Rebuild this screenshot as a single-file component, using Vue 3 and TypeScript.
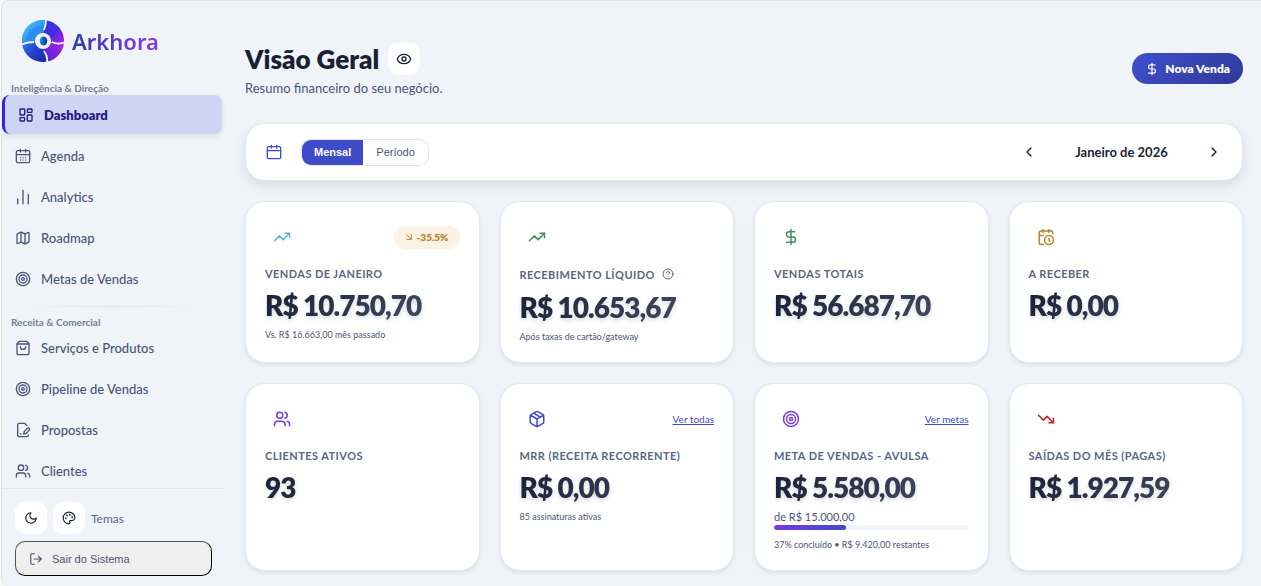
<script setup lang="ts">
import { ref } from 'vue'

interface NavItem { label: string; icon: string; active?: boolean }
interface NavGroup { title: string; items: NavItem[] }
interface Card {
  icon: string
  tone: string
  label: string
  value: string
  note?: string
  trend?: string
  link?: string
  help?: boolean
  goal?: string
  progress?: number
}

const icons: Record<string, string> = {
  dashboard: '<rect x="3" y="3" width="7" height="9" rx="1"/><rect x="14" y="3" width="7" height="5" rx="1"/><rect x="14" y="12" width="7" height="9" rx="1"/><rect x="3" y="16" width="7" height="5" rx="1"/>',
  calendarDays: '<path d="M8 2v4M16 2v4"/><rect x="2" y="4" width="20" height="18" rx="2"/><path d="M2 10h20M8 14h.01M12 14h.01M16 14h.01M8 18h.01M12 18h.01M16 18h.01"/>',
  calendar: '<path d="M8 2v4M16 2v4"/><rect x="2" y="4" width="20" height="18" rx="2"/><path d="M2 10h20"/>',
  chart: '<path d="M20 22V8M12 22V2M4 22v-7"/>',
  map: '<path d="M14.106 5.553a2 2 0 0 0 1.788 0l3.659-1.83A1 1 0 0 1 21 4.619v12.764a1 1 0 0 1-.553.894l-4.553 2.277a2 2 0 0 1-1.788 0l-4.212-2.106a2 2 0 0 0-1.788 0l-3.659 1.83A1 1 0 0 1 3 19.381V6.618a1 1 0 0 1 .553-.894l4.553-2.277a2 2 0 0 1 1.788 0z"/><path d="M15 5.764v15M9 3.236v15"/>',
  target: '<circle cx="12" cy="12" r="10"/><circle cx="12" cy="12" r="6"/><circle cx="12" cy="12" r="2"/>',
  bag: '<path d="M6 2 3 6v14a2 2 0 0 0 2 2h14a2 2 0 0 0 2-2V6l-3-4Z"/><path d="M3 6h18M16 10a4 4 0 0 1-8 0"/>',
  proposal: '<path d="M20 19.5v.5a2 2 0 0 1-2 2H6a2 2 0 0 1-2-2V4a2 2 0 0 1 2-2h8.5L18 5.5"/><path d="M8 18h1"/><path d="M18.42 9.61a2.1 2.1 0 1 1 2.97 2.97L16.95 17 13 18l.99-3.95Z"/>',
  users: '<path d="M16 21v-2a4 4 0 0 0-4-4H6a4 4 0 0 0-4 4v2"/><circle cx="9" cy="7" r="4"/><path d="M22 21v-2a4 4 0 0 0-3-3.87M16 3.13a4 4 0 0 1 0 7.75"/>',
  moon: '<path d="M12 3a6 6 0 0 0 9 9 9 9 0 1 1-9-9Z"/>',
  palette: '<circle cx="13.5" cy="6.5" r=".6"/><circle cx="17.5" cy="10.5" r=".6"/><circle cx="8.5" cy="7.5" r=".6"/><circle cx="6.5" cy="12.5" r=".6"/><path d="M12 2C6.5 2 2 6.5 2 12s4.5 10 10 10c.926 0 1.648-.746 1.648-1.688 0-.437-.18-.835-.437-1.125-.29-.289-.438-.652-.438-1.125a1.64 1.64 0 0 1 1.668-1.668h1.996c3.051 0 5.555-2.503 5.555-5.554C21.965 6.012 17.461 2 12 2z"/>',
  logout: '<path d="M9 21H5a2 2 0 0 1-2-2V5a2 2 0 0 1 2-2h4M16 17l5-5-5-5M21 12H9"/>',
  eye: '<path d="M2.06 12.35a1 1 0 0 1 0-.7 10.75 10.75 0 0 1 19.88 0 1 1 0 0 1 0 .7 10.75 10.75 0 0 1-19.88 0"/><circle cx="12" cy="12" r="3"/>',
  dollar: '<path d="M12 2v20M17 5H9.5a3.5 3.5 0 0 0 0 7h5a3.5 3.5 0 0 1 0 7H6"/>',
  up: '<path d="m22 7-8.5 8.5-5-5L2 17"/><path d="M16 7h6v6"/>',
  down: '<path d="m22 17-8.5-8.5-5 5L2 7"/><path d="M16 17h6v-6"/>',
  calendarClock: '<path d="M21 7.5V6a2 2 0 0 0-2-2H5a2 2 0 0 0-2 2v14a2 2 0 0 0 2 2h3.5M16 2v4M8 2v4M3 10h5M17.5 17.5 16 16.3V14"/><circle cx="16" cy="16" r="6"/>',
  box: '<path d="M11 21.73a2 2 0 0 0 2 0l7-4A2 2 0 0 0 21 16V8a2 2 0 0 0-1-1.73l-7-4a2 2 0 0 0-2 0l-7 4A2 2 0 0 0 3 8v8a2 2 0 0 0 1 1.73zM12 22V12M3.3 7l8.7 5 8.7-5M7.5 4.27l9 5.15"/>',
  arrow: '<path d="m5 5 14 14M19 5v14H5"/>',
  help: '<circle cx="12" cy="12" r="10"/><path d="M9.09 9a3 3 0 0 1 5.83 1c0 2-3 3-3 3M12 17h.01"/>',
  left: '<path d="m15 18-6-6 6-6"/>',
  right: '<path d="m9 18 6-6-6-6"/>',
}

const groups: NavGroup[] = [
  {
    title: 'Inteligência & Direção',
    items: [
      { label: 'Dashboard', icon: 'dashboard', active: true },
      { label: 'Agenda', icon: 'calendarDays' },
      { label: 'Analytics', icon: 'chart' },
      { label: 'Roadmap', icon: 'map' },
      { label: 'Metas de Vendas', icon: 'target' },
    ],
  },
  {
    title: 'Receita & Comercial',
    items: [
      { label: 'Serviços e Produtos', icon: 'bag' },
      { label: 'Pipeline de Vendas', icon: 'target' },
      { label: 'Propostas', icon: 'proposal' },
      { label: 'Clientes', icon: 'users' },
    ],
  },
]

const cards: Card[] = [
  { icon: 'up', tone: 'cyan', label: 'Vendas de Janeiro', value: 'R$ 10.750,70', note: 'Vs. R$ 16.663,00 mês passado', trend: '-35.5%' },
  { icon: 'up', tone: 'green', label: 'Recebimento Líquido', value: 'R$ 10.653,67', note: 'Após taxas de cartão/gateway', help: true },
  { icon: 'dollar', tone: 'green', label: 'Vendas Totais', value: 'R$ 56.687,70' },
  { icon: 'calendarClock', tone: 'amber', label: 'A Receber', value: 'R$ 0,00' },
  { icon: 'users', tone: 'purple', label: 'Clientes Ativos', value: '93' },
  { icon: 'box', tone: 'blue', label: 'MRR (Receita Recorrente)', value: 'R$ 0,00', note: '85 assinaturas ativas', link: 'Ver todas' },
  { icon: 'target', tone: 'purple', label: 'Meta de Vendas - Avulsa', value: 'R$ 5.580,00', note: '37% concluído • R$ 9.420,00 restantes', link: 'Ver metas', goal: 'de R$ 15.000,00', progress: 37 },
  { icon: 'down', tone: 'red', label: 'Saídas do Mês (Pagas)', value: 'R$ 1.927,59' },
]

const period = ref<'Mensal' | 'Período'>('Mensal')
</script>

<template>
  <div class="app">
    <aside class="sidebar">
      <div class="brand">
        <svg class="logo" viewBox="0 0 42 42" aria-hidden="true">
          <defs>
            <linearGradient id="g1" x1="0" y1="0" x2="1" y2="1"><stop offset="0" stop-color="#3fd0ff" /><stop offset="1" stop-color="#2468ea" /></linearGradient>
            <linearGradient id="g2" x1="0" y1="0" x2="1" y2="1"><stop offset="0" stop-color="#2b38dc" /><stop offset=".55" stop-color="#4a2ae0" /><stop offset="1" stop-color="#b51fe0" /></linearGradient>
            <linearGradient id="g3" x1="1" y1="0" x2="0" y2="1"><stop offset="0" stop-color="#c01fdc" /><stop offset=".5" stop-color="#7a24dc" /><stop offset="1" stop-color="#4a24d2" /></linearGradient>
            <linearGradient id="g4" x1="0" y1="0" x2="1" y2="1"><stop offset="0" stop-color="#2b7df2" /><stop offset=".5" stop-color="#2340cc" /><stop offset="1" stop-color="#20249c" /></linearGradient>
            <linearGradient id="g5"><stop offset="0" stop-color="#1b9af0" /><stop offset="1" stop-color="#102a86" /></linearGradient>
          </defs>
          <path d="M21 21 22 9Q23 4 24 .2A21 21 0 0 0 0 24Q6 22 12 22Z" fill="url(#g1)" />
          <path d="M9 21Q10 12 21 9L23 5Q12 4 6 13Q4 17 4 23Z" fill="#2b7df2" opacity=".55" />
          <path d="M21 21 22 9Q24 5 24 .2A21 21 0 0 1 42 22Q36 24 29 22Z" fill="url(#g2)" />
          <path d="M21 21 30 23Q36 25 42 22A21 21 0 0 1 25 41.6Q26 36 22 31Z" fill="url(#g3)" />
          <path d="M21 21 22 31Q26 36 25 41.6A21 21 0 0 1 0 24Q6 21 12 22Z" fill="url(#g4)" />
          <path d="M24 0Q24 5 22 10M42 22.500Q36 25 30 22M25 42Q26 36 22 31M0 24.500Q6 22 12 22" fill="none" stroke="#f2f6fc" stroke-width="1.800" />
          <circle cx="21" cy="21" r="8" fill="#f2f6fc" />
          <ellipse cx="21.500" cy="21" rx="3.800" ry="4.600" fill="url(#g5)" />
        </svg>
        <span class="brand-name">Arkhora</span>
      </div>

      <nav class="nav" aria-label="Principal">
        <section v-for="group in groups" :key="group.title" class="nav-group">
          <h2 class="nav-title">{{ group.title }}</h2>
          <a v-for="item in group.items" :key="item.label" href="#" class="nav-item" :class="{ active: item.active }">
            <svg class="icon icon-nav" viewBox="0 0 24 24" aria-hidden="true" v-html="icons[item.icon]"></svg>
            <span>{{ item.label }}</span>
          </a>
        </section>
      </nav>

      <div class="sidebar-footer">
        <div class="themes">
          <button type="button" class="square" aria-label="Modo escuro"><svg class="icon icon-small" viewBox="0 0 24 24" v-html="icons.moon"></svg></button>
          <button type="button" class="square" aria-label="Paleta"><svg class="icon icon-small" viewBox="0 0 24 24" v-html="icons.palette"></svg></button>
          <span>Temas</span>
        </div>
        <button type="button" class="logout">
          <svg class="icon icon-small" viewBox="0 0 24 24" aria-hidden="true" v-html="icons.logout"></svg>
          <span>Sair do Sistema</span>
        </button>
      </div>
    </aside>

    <main class="main">
      <header class="header">
        <div>
          <div class="title-row">
            <h1>Visão Geral</h1>
            <button type="button" class="square" aria-label="Ocultar valores"><svg class="icon icon-eye" viewBox="0 0 24 24" v-html="icons.eye"></svg></button>
          </div>
          <p class="subtitle">Resumo financeiro do seu negócio.</p>
        </div>
        <button type="button" class="primary">
          <svg class="icon icon-small" viewBox="0 0 24 24" aria-hidden="true" v-html="icons.dollar"></svg>
          <span>Nova Venda</span>
        </button>
      </header>

      <section class="filter">
        <svg class="icon icon-filter" viewBox="0 0 24 24" aria-hidden="true" v-html="icons.calendar"></svg>
        <div class="segmented">
          <button type="button" :class="{ on: period === 'Mensal' }" @click="period = 'Mensal'">Mensal</button>
          <button type="button" :class="{ on: period === 'Período' }" @click="period = 'Período'">Período</button>
        </div>
        <div class="month">
          <button type="button" class="step" aria-label="Mês anterior"><svg class="icon icon-nav" viewBox="0 0 24 24" v-html="icons.left"></svg></button>
          <strong>Janeiro de 2026</strong>
          <button type="button" class="step" aria-label="Próximo mês"><svg class="icon icon-nav" viewBox="0 0 24 24" v-html="icons.right"></svg></button>
        </div>
      </section>

      <section class="grid">
        <article v-for="card in cards" :key="card.label" class="card">
          <div class="card-top">
            <span class="card-icon" :class="card.tone"><svg class="icon icon-card" viewBox="0 0 24 24" aria-hidden="true" v-html="icons[card.icon]"></svg></span>
            <span v-if="card.trend" class="trend">
              <svg class="icon icon-trend" viewBox="0 0 24 24" aria-hidden="true" v-html="icons.arrow"></svg>{{ card.trend }}
            </span>
            <a v-if="card.link" href="#" class="card-link">{{ card.link }}</a>
          </div>
          <h3 class="label" :class="{ tall: card.help }">
            {{ card.label }}
            <svg v-if="card.help" class="icon icon-help" viewBox="0 0 24 24" aria-hidden="true" v-html="icons.help"></svg>
          </h3>
          <div class="value"><span>{{ card.value }}</span></div>
          <template v-if="card.progress">
            <p class="goal">{{ card.goal }}</p>
            <div class="track"><div class="fill" :style="{ width: card.progress + '%' }"></div></div>
          </template>
          <p v-if="card.note" class="note">{{ card.note }}</p>
        </article>
      </section>
    </main>
  </div>
</template>

<style>
body { margin: 0; background: #f8f8f8; overflow: hidden; }
</style>

<style scoped>
* { box-sizing: border-box; }
h1, h2, h3, p { margin: 0; }
button { font: inherit; color: inherit; cursor: pointer; }

.app {
  display: flex;
  height: 100vh;
  margin-left: 1px;
  border-left: 1px solid #e2e3e5;
  border-top: 1px solid #e2e3e5;
  border-radius: 8px 0 0 8px;
  background: #f0f4f8;
  color: #1a1f36;
  font-family: Lato, "Liberation Sans", sans-serif;
  overflow: hidden;
}
.icon {
  display: block;
  flex: none;
  fill: none;
  stroke: currentColor;
  stroke-width: 2;
  stroke-linecap: round;
  stroke-linejoin: round;
}
.icon-nav { width: 16px; height: 16px; }
.icon-small { width: 14px; height: 14px; }
.icon-eye { width: 16px; height: 16px; }
.icon-filter { width: 16px; height: 16px; color: #3f4cc8; }
.icon-card { width: 18px; height: 18px; }
.icon-trend { width: 8px; height: 8px; stroke-width: 3; }
.icon-help { width: 12px; height: 12px; }

.sidebar { display: flex; flex-direction: column; flex: none; width: 223px; }
.brand { display: flex; align-items: center; gap: 8px; padding: 19px 20px; }
.logo { width: 42px; height: 42px; }
.brand-name {
  font-family: "Noto Sans", sans-serif;
  font-size: 22px;
  font-weight: 600;
  line-height: 30px;
  background: linear-gradient(90deg, #2f3cae, #6a35cf 60%, #8540dc);
  background-clip: text;
  color: transparent;
}
.nav { flex: 1; min-height: 0; overflow: hidden; }
.nav-group { display: flex; flex-direction: column; gap: 3px; padding-right: 3px; }
.nav-group + .nav-group::before {
  content: "";
  height: 1px;
  margin: 8px 20px 5px;
  background: linear-gradient(90deg, transparent, #dde3f0, transparent);
}
.nav-title { height: 14px; margin-bottom: -3px; padding-left: 9px; font-size: 10px; font-weight: 700; line-height: 14px; color: #717d96; }
.nav-item {
  display: flex;
  align-items: center;
  gap: 10px;
  height: 38px;
  padding-left: 13px;
  border-radius: 8px;
  font-size: 13px;
  font-weight: 500;
  color: #4a5578;
  text-decoration: none;
}
.nav-item.active {
  height: 39px;
  border-left: 3px solid #3a24d4;
  background: #cdd4f4;
  color: #2a1a80;
  font-weight: 800;
  box-shadow: 0 2px 5px rgba(60, 70, 140, .12);
}

.sidebar-footer { padding: 13px 13px 10px; border-top: 1px solid #e0e6f0; }
.themes { display: flex; align-items: center; gap: 6px; margin-bottom: 7px; font-size: 12px; color: #5a6785; }
.square {
  display: flex;
  align-items: center;
  justify-content: center;
  width: 32px;
  height: 32px;
  padding: 0;
  border: 0;
  border-radius: 10px;
  background: #fff;
  color: #1a1f36;
}
.logout {
  display: flex;
  align-items: center;
  gap: 9px;
  width: 100%;
  height: 35px;
  padding: 0 13px;
  border: 1px outset #000;
  border-radius: 10px;
  background: #efefef;
  font-family: "Liberation Sans", Arial, sans-serif;
  font-size: 11px;
  color: #4a5578;
}

.main { flex: 1; min-width: 0; padding: 42px 18px 14px 20px; }
.header { display: flex; align-items: flex-start; justify-content: space-between; margin-bottom: 26px; }
.title-row { display: flex; align-items: center; gap: 9px; }
h1 { font-size: 26px; font-weight: 800; line-height: 32px; }
.subtitle { margin-top: 4px; font-size: 13px; line-height: 18px; color: #4a5578; }
.primary {
  display: flex;
  align-items: center;
  gap: 6px;
  height: 31px;
  margin-top: 10px;
  padding: 0 13px;
  border: 0;
  border-radius: 16px;
  background: linear-gradient(135deg, #3f4fd0, #2f3a98);
  color: #fff;
  font-size: 12px;
  font-weight: 800;
}

.filter {
  display: flex;
  align-items: center;
  height: 58px;
  margin-bottom: 20px;
  padding: 0 20px;
  border: 1px solid #e2e7f0;
  border-radius: 20px;
  background: #fff;
  box-shadow: 0 5px 12px rgba(26, 31, 54, .11);
}
.segmented {
  display: flex;
  height: 27px;
  margin-left: 19px;
  border: 1px solid #e0e5f0;
  border-radius: 10px;
  overflow: hidden;
}
.segmented button {
  padding: 0 13px;
  border: 0;
  background: #fff;
  color: #4a5578;
  font-family: "Liberation Sans", Arial, sans-serif;
  font-size: 11px;
}
.segmented button.on { padding: 0 12px; background: #3f4cc8; color: #fff; font-weight: 700; }
.month { display: flex; align-items: center; justify-content: space-between; width: 201px; margin-left: auto; font-size: 13px; }
.step { padding: 0; border: 0; background: none; }

.grid { display: grid; grid-template-columns: repeat(4, minmax(0, 1fr)); gap: 20px; }
.card {
  padding: 18px 19px;
  border: 1px solid #e2e7f0;
  border-radius: 20px;
  background: #fff;
  box-shadow: 0 2px 4px rgba(26, 31, 54, .09);
}
.card-top { display: flex; align-items: center; justify-content: space-between; height: 34px; }
.card-icon { display: flex; align-items: center; justify-content: center; width: 34px; height: 34px; }
.cyan { color: #5fb4cc; }
.green { color: #3f9160; }
.amber { color: #b7832f; }
.purple { color: #7c3ae0; }
.blue { color: #3f4cc8; }
.red { color: #b8262e; }
.trend {
  display: flex;
  align-items: center;
  gap: 4px;
  height: 23px;
  padding: 0 11px;
  border-radius: 12px;
  background: #fbf1e5;
  color: #b7832f;
  font-size: 10px;
  font-weight: 800;
}
.card-link { font-size: 10px; color: #3f4cc8; }
.label {
  display: flex;
  align-items: center;
  gap: 7px;
  height: 16px;
  margin-top: 11px;
  font-size: 11px;
  font-weight: 700;
  letter-spacing: .04em;
  text-transform: uppercase;
  white-space: nowrap;
  color: #5a6680;
}
.label.tall { height: 18px; }
.value { margin-top: 6px; font-size: 28px; font-weight: 800; line-height: 36px; letter-spacing: -1px; filter: drop-shadow(0 2px 2px rgba(26, 31, 54, .18)); }
.value span { display: block; background: linear-gradient(135deg, #1a1f36, #475268); background-clip: text; color: transparent; }
.note { margin-top: 5px; font-size: 9px; line-height: 14px; color: #4a5578; }
.goal { margin-top: 5px; font-size: 11px; line-height: 14px; color: #4a5578; }
.track { height: 5px; margin-top: 1px; border-radius: 3px; background: #f0f3f8; overflow: hidden; }
.fill { height: 100%; border-radius: 3px; background: linear-gradient(90deg, #7c3ae0, #3f4cc8); }
.track + .note { margin-top: 8px; }
</style>
